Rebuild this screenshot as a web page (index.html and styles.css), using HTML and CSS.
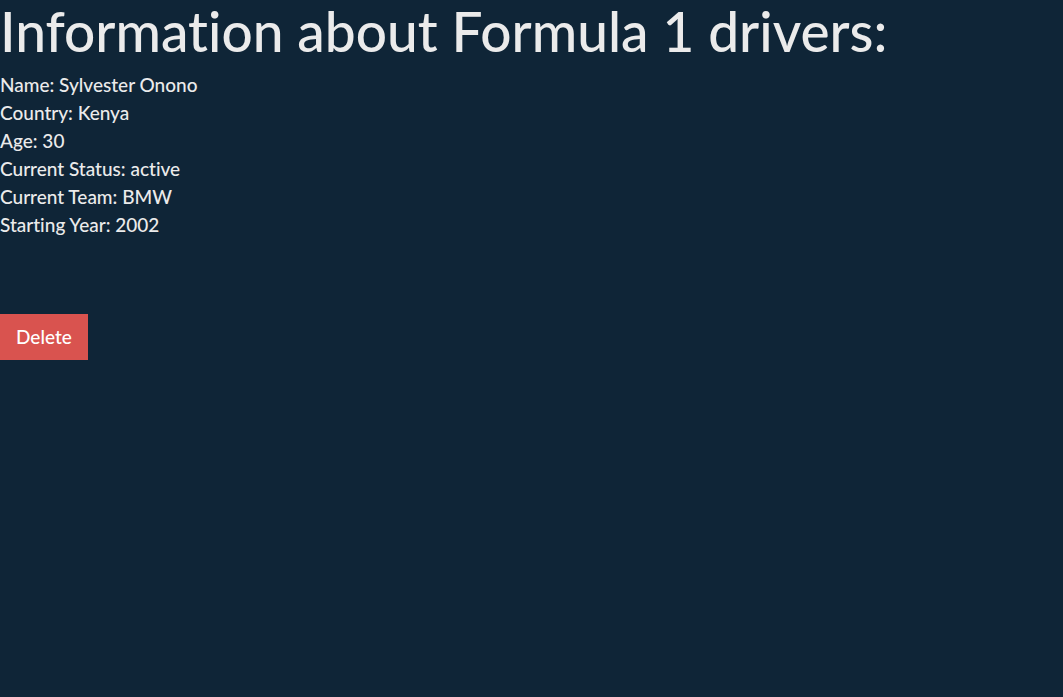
FILE: index.html
```html
<!DOCTYPE html>
<html lang="en">
<head>
<meta charset="utf-8">
<title>Formula 1 drivers</title>
<link rel="stylesheet" href="styles.css">
</head>
<body>
<main>
<h1 class="title">Information about Formula 1 drivers:</h1>
<ul class="details">
<li>Name: Sylvester Onono</li>
<li>Country: Kenya</li>
<li>Age: 30</li>
<li>Current Status: active</li>
<li>Current Team: BMW</li>
<li>Starting Year: 2002</li>
</ul>
<button class="btn-delete" type="button">Delete</button>
</main>
</body>
</html>
```
FILE: styles.css
```css
* {
  box-sizing: border-box;
}

body {
  margin: 0;
  background: #0f2537;
  color: #ebebeb;
  font-family: Lato, sans-serif;
  font-size: 19px;
  font-weight: 500;
  font-variant-ligatures: none;
  line-height: 28px;
}

.title {
  margin: 0 0 9px;
  font-size: 55px;
  font-weight: 500;
  line-height: 62px;
}

.details {
  margin: 0 0 75px;
  padding: 0;
  list-style: none;
}

.btn-delete {
  display: block;
  padding: 9px 16px;
  border: 0;
  background: #d9534f;
  color: #fff;
  font: inherit;
  cursor: pointer;
}
```
